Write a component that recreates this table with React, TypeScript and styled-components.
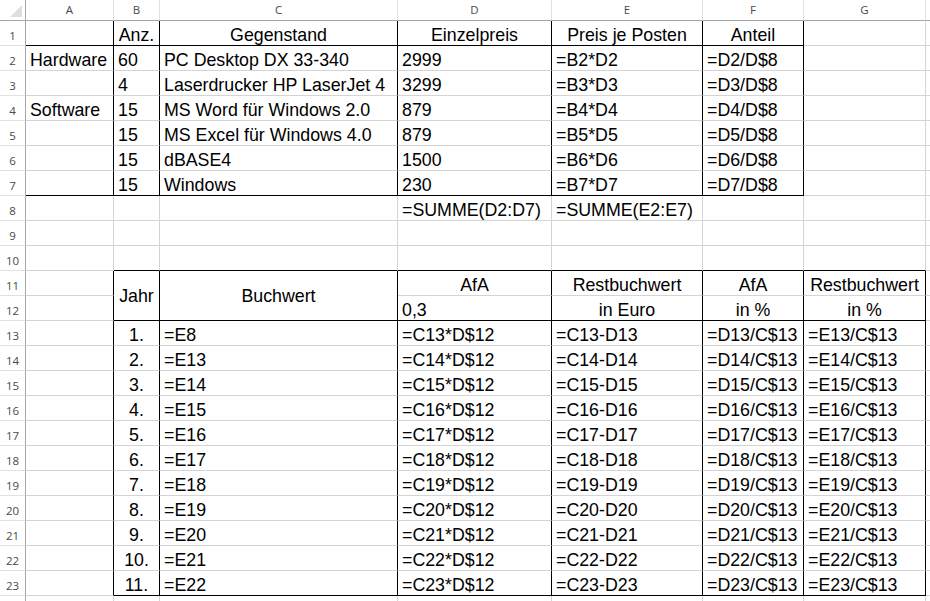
import React from "react";
import styled, { createGlobalStyle, css } from "styled-components";

const GlobalStyle = createGlobalStyle`
  html, body { margin: 0; padding: 0; background: #ffffff; overflow: hidden; }
  #root { width: 930px; height: 601px; overflow: hidden; }
`;

const GRID = "#d4d4d4";
const BLACK = "#000000";
const HEAD_LINE = "#a6a6a6";
const HEAD_SEP = "#e1e1e1";

const Sheet = styled.div`
  display: grid;
  grid-template-columns: 26px 88px 46px 238px 154px 151px 101px 122px 1fr;
  grid-template-rows: 21px repeat(24, 25px);
  width: 930px;
  height: 601px;
  overflow: hidden;
  background: #ffffff;
`;

const Corner = styled.div`
  box-sizing: border-box;
  border-right: 1px solid ${HEAD_LINE};
  border-bottom: 1px solid ${HEAD_LINE};
  display: flex;
  align-items: flex-end;
  justify-content: flex-end;
  padding: 0 3px 3px 0;
`;

const ColHead = styled.div`
  box-sizing: border-box;
  border-right: 1px solid ${HEAD_SEP};
  border-bottom: 1px solid ${HEAD_LINE};
  display: flex;
  align-items: center;
  justify-content: center;
  font-family: "Open Sans", "Noto Sans", sans-serif;
  font-size: 11.5px;
  line-height: 20px;
  color: #4a4a4a;
  overflow: hidden;
`;

const RowHead = styled.div`
  box-sizing: border-box;
  border-right: 1px solid ${HEAD_LINE};
  border-bottom: 1px solid ${HEAD_SEP};
  display: flex;
  align-items: flex-end;
  justify-content: center;
  padding-bottom: 2px;
  font-family: "Open Sans", "Noto Sans", sans-serif;
  font-size: 11.5px;
  line-height: 14px;
  color: #4a4a4a;
  overflow: hidden;
`;

type Align = "l" | "c";

const Cell = styled.div<{ $align: Align; $rb: boolean; $bb: boolean; $span: number; $mid: boolean }>`
  box-sizing: border-box;
  border-right: 1px solid ${(p) => (p.$rb ? BLACK : GRID)};
  border-bottom: 1px solid ${(p) => (p.$bb ? BLACK : GRID)};
  display: flex;
  align-items: ${(p) => (p.$mid ? "center" : "flex-end")};
  justify-content: ${(p) => (p.$align === "c" ? "center" : "flex-start")};
  padding: 0 4px;
  font-family: "Liberation Sans", Arial, sans-serif;
  font-size: 17.8px;
  line-height: 20px;
  color: #000000;
  white-space: nowrap;
  ${(p) =>
    p.$span > 1 &&
    css`
      grid-row: span ${p.$span};
    `}
`;

type Spec = { t?: string; a?: Align; rb?: boolean; bb?: boolean; span?: number };

const COLS = ["A", "B", "C", "D", "E", "F", "G", "H"];

function buildRows(): Spec[][] {
  const rows: Spec[][] = [];
  const blank = (): Spec => ({});

  rows.push([
    { bb: true, rb: true },
    { t: "Anz.", a: "c", bb: true, rb: true },
    { t: "Gegenstand", a: "c", bb: true, rb: true },
    { t: "Einzelpreis", a: "c", bb: true, rb: true },
    { t: "Preis je Posten", a: "c", bb: true, rb: true },
    { t: "Anteil", a: "c", bb: true, rb: true },
    blank(),
    blank(),
  ]);

  const top: [string, string, string, string][] = [
    ["Hardware", "60", "PC Desktop DX 33-340", "2999"],
    ["", "4", "Laserdrucker HP LaserJet 4", "3299"],
    ["Software", "15", "MS Word für Windows 2.0", "879"],
    ["", "15", "MS Excel für Windows 4.0", "879"],
    ["", "15", "dBASE4", "1500"],
    ["", "15", "Windows", "230"],
  ];
  top.forEach(([a, b, c, d], i) => {
    const r = i + 2;
    const last = r === 7;
    rows.push([
      { t: a, rb: true, bb: last },
      { t: b, rb: true, bb: last },
      { t: c, rb: true, bb: last },
      { t: d, rb: true, bb: last },
      { t: `=B${r}*D${r}`, rb: true, bb: last },
      { t: `=D${r}/D$8`, rb: true, bb: last },
      blank(),
      blank(),
    ]);
  });

  rows.push([blank(), blank(), blank(), { t: "=SUMME(D2:D7)" }, { t: "=SUMME(E2:E7)" }, blank(), blank(), blank()]);
  rows.push([blank(), blank(), blank(), blank(), blank(), blank(), blank(), blank()]);
  rows.push([blank(), { bb: true }, { bb: true }, { bb: true }, { bb: true }, { bb: true }, { bb: true }, blank()]);
  rows.push([
    { rb: true },
    { t: "Jahr", a: "c", rb: true, bb: true, span: 2 },
    { t: "Buchwert", a: "c", rb: true, bb: true, span: 2 },
    { t: "AfA", a: "c", rb: true },
    { t: "Restbuchwert", a: "c", rb: true },
    { t: "AfA", a: "c", rb: true },
    { t: "Restbuchwert", a: "c", rb: true },
    blank(),
  ]);
  rows.push([
    { rb: true },
    { t: "0,3", rb: true, bb: true },
    { t: "in Euro", a: "c", rb: true, bb: true },
    { t: "in %", a: "c", rb: true, bb: true },
    { t: "in %", a: "c", rb: true, bb: true },
    blank(),
  ]);
  for (let r = 13; r <= 23; r++) {
    const last = r === 23;
    rows.push([
      { rb: true },
      { t: `${r - 12}.`, a: "c", rb: true, bb: last },
      { t: `=E${r === 13 ? 8 : r - 1}`, rb: true, bb: last },
      { t: `=C${r}*D$12`, rb: true, bb: last },
      { t: `=C${r}-D${r}`, rb: true, bb: last },
      { t: `=D${r}/C$13`, rb: true, bb: last },
      { t: `=E${r}/C$13`, rb: true, bb: last },
      blank(),
    ]);
  }
  rows.push([blank(), blank(), blank(), blank(), blank(), blank(), blank(), blank()]);
  return rows;
}

const CornerMark = () => (
  <svg width="12" height="12" viewBox="0 0 12 12">
    <polygon points="12,0 12,12 0,12" fill="#dfdfdf" />
  </svg>
);

export default function App() {
  const rows = buildRows();
  return (
    <>
      <GlobalStyle />
      <Sheet>
        <Corner>
          <CornerMark />
        </Corner>
        {COLS.map((c) => (
          <ColHead key={c}>{c === "H" ? "" : c}</ColHead>
        ))}
        {rows.map((cells, ri) => (
          <React.Fragment key={ri}>
            <RowHead>{ri < 23 ? ri + 1 : ""}</RowHead>
            {cells.map((s, ci) => (
              <Cell
                key={ci}
                $align={s.a ?? "l"}
                $rb={!!s.rb}
                $bb={!!s.bb}
                $span={s.span ?? 1}
                $mid={(s.span ?? 1) > 1}
              >
                {s.t}
              </Cell>
            ))}
          </React.Fragment>
        ))}
      </Sheet>
    </>
  );
}
